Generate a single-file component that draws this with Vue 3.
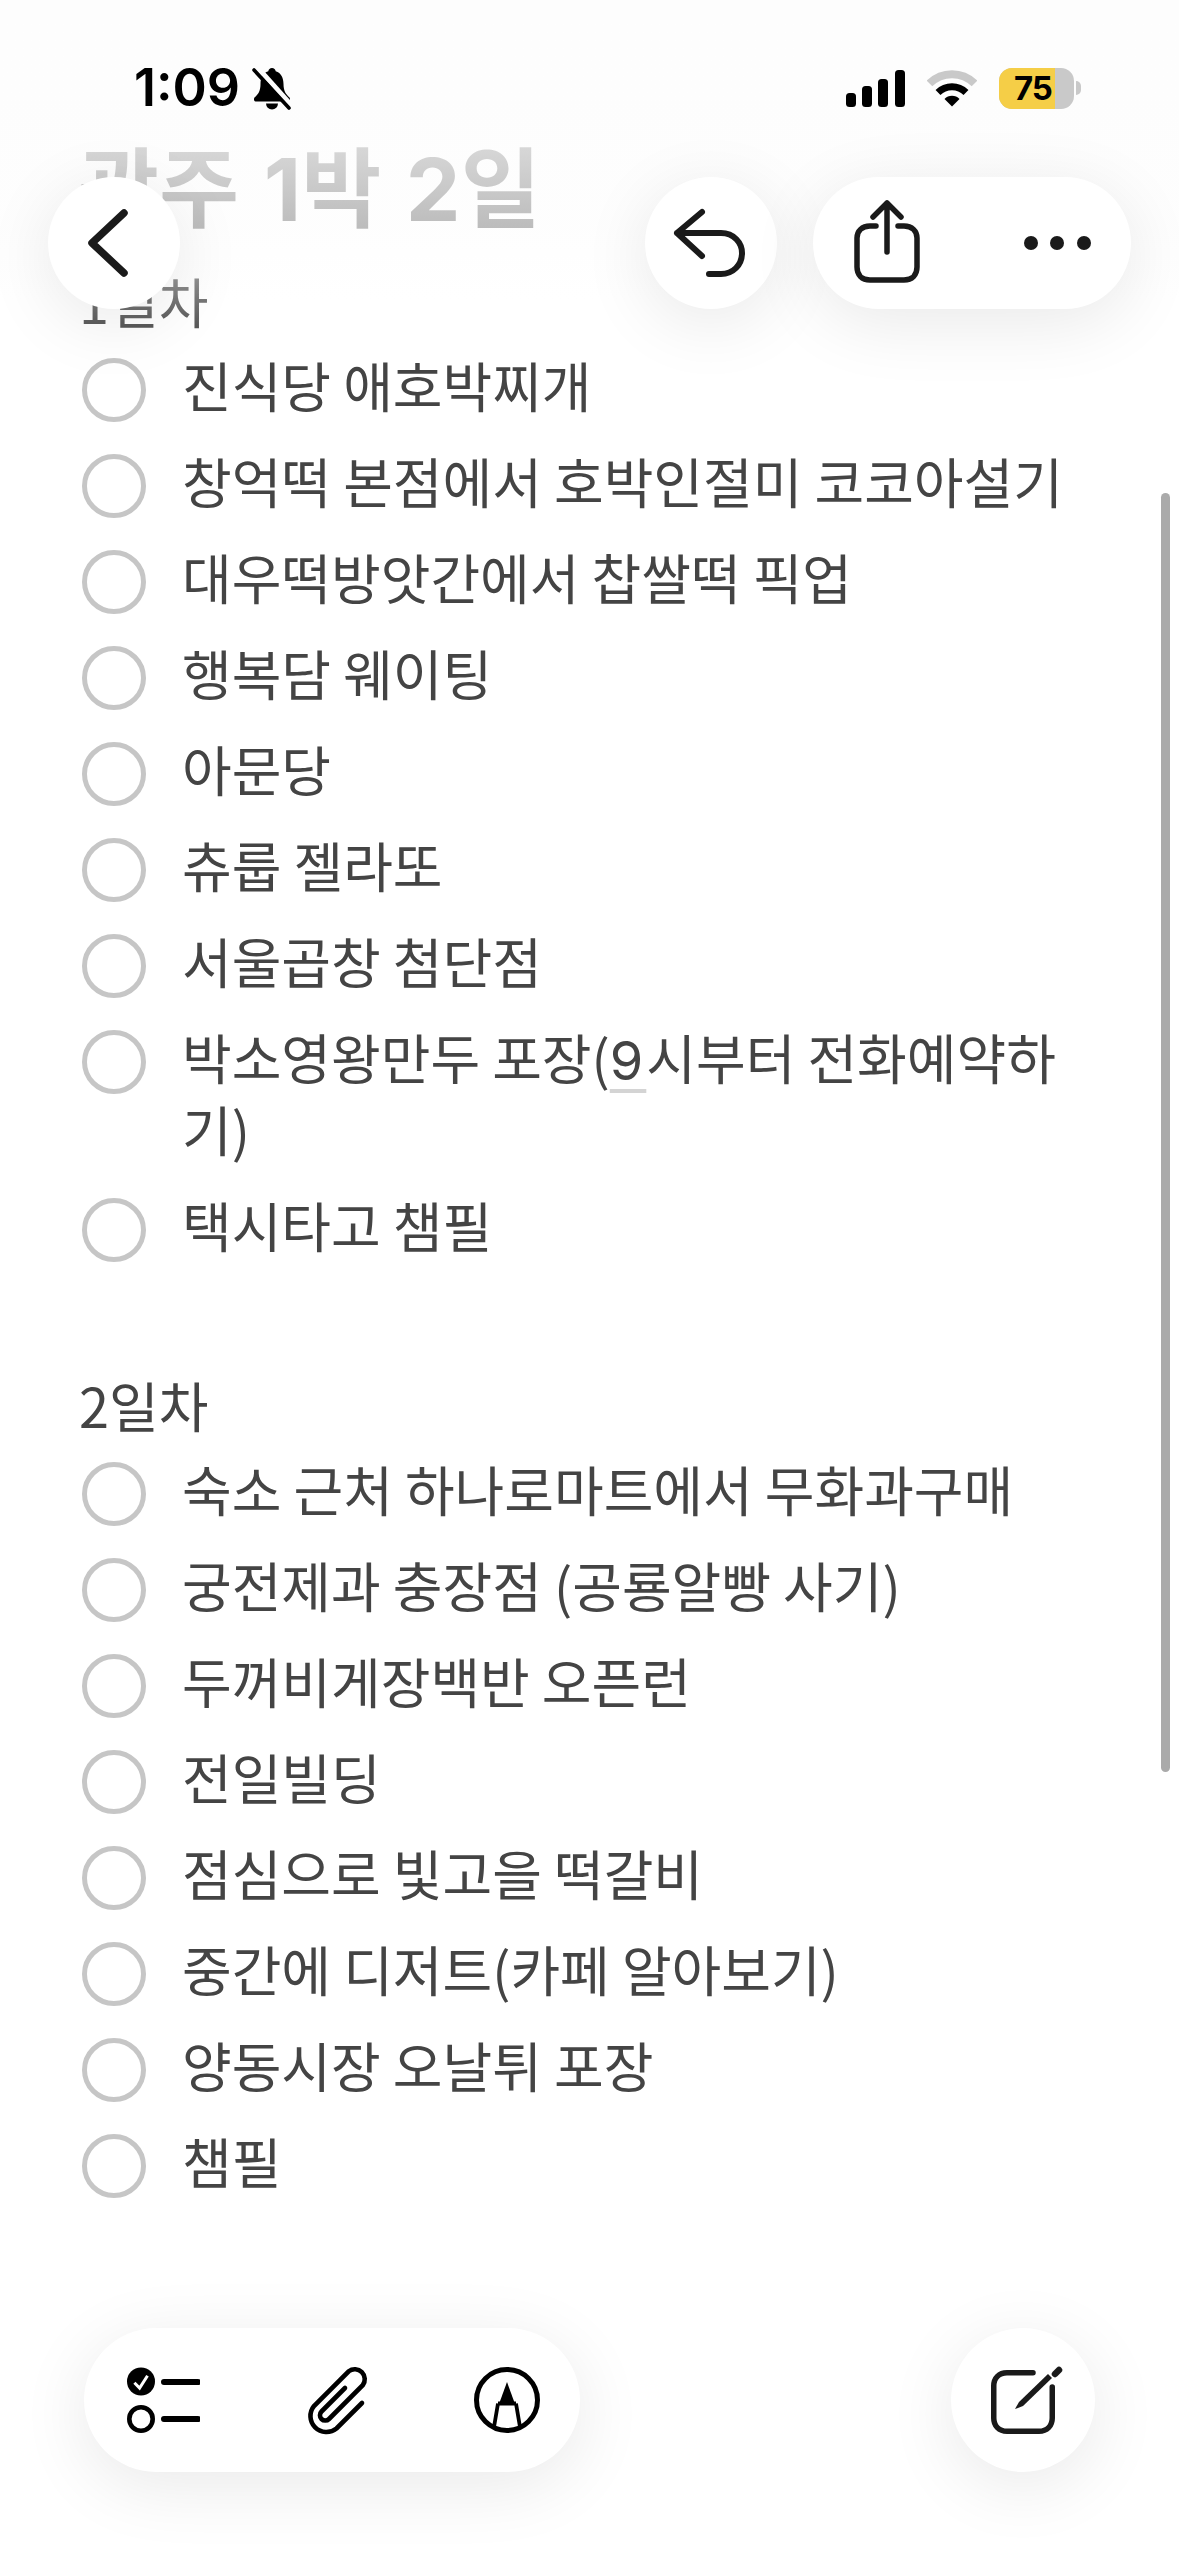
<script setup>
const dayOne = [
  { text: '진식당 애호박찌개' },
  { text: '창억떡 본점에서 호박인절미 코코아설기' },
  { text: '대우떡방앗간에서 찹쌀떡 픽업' },
  { text: '행복담 웨이팅' },
  { text: '아문당' },
  { text: '츄룹 젤라또' },
  { text: '서울곱창 첨단점' },
  { text: '박소영왕만두 포장(', mark: '9', rest: '시부터 전화예약하기)' },
  { text: '택시타고 챔필' }
]
const dayTwo = [
  { text: '숙소 근처 하나로마트에서 무화과구매' },
  { text: '궁전제과 충장점 (공룡알빵 사기)' },
  { text: '두꺼비게장백반 오픈런' },
  { text: '전일빌딩' },
  { text: '점심으로 빛고을 떡갈비' },
  { text: '중간에 디저트(카페 알아보기)' },
  { text: '양동시장 오날튀 포장' },
  { text: '챔필' }
]
const sections = [
  { title: '1일차', items: dayOne },
  { title: '2일차', items: dayTwo }
]
</script>

<template>
  <div class="screen">
    <main class="note">
      <h1 class="title">광주 1박 2일</h1>
      <section v-for="s in sections" :key="s.title" class="section">
        <p class="day">{{ s.title }}</p>
        <ul class="list">
          <li v-for="item in s.items" :key="item.text" class="row">
            <span class="circle"></span>
            <span class="label">{{ item.text }}<span v-if="item.mark" class="link">{{ item.mark }}</span>{{ item.rest }}</span>
          </li>
        </ul>
      </section>
    </main>

    <div class="fade"></div>

    <header class="status">
      <div class="status-left">
        <span class="time">1:09</span>
        <svg class="bell" width="40" height="43" viewBox="0 0 40 43">
          <path d="M20 1c-2 0-3.5 1.4-3.7 3.2C10.800 5.800 8.500 11 8.500 17c0 6.500-2 10-6 13.500-.8.700-.8 4 1 4h33c1.800 0 1.800-3.300 1-4-4-3.500-6-7-6-13.500 0-6-2.300-11.200-7.800-12.800C23.500 2.400 22 1 20 1z" fill="#000"/>
          <path d="M14 36.500a6 6 0 0 0 12 0z" fill="#000"/>
          <path d="M6 1 40 39" stroke="#fdfdfd" stroke-width="5"/>
          <path d="M2 3 37 41" stroke="#000" stroke-width="3.600" stroke-linecap="round"/>
        </svg>
      </div>
      <div class="status-right">
        <svg width="59" height="37" viewBox="0 0 59 37">
          <rect x="0" y="23" width="10" height="14" rx="3.500"/>
          <rect x="16" y="16" width="10" height="21" rx="3.500"/>
          <rect x="32" y="9" width="10" height="28" rx="3.500"/>
          <rect x="49" y="0" width="10" height="37" rx="3.500"/>
        </svg>
        <svg width="50" height="38" viewBox="0 0 50 38">
          <path d="M2.500 14.500a32 32 0 0 1 45 0" fill="none" stroke="#c9c9c9" stroke-width="8"/>
          <path d="M11 23.500a20 20 0 0 1 28 0" fill="none" stroke="#000" stroke-width="7"/>
          <path d="M17.500 30a10.500 10.500 0 0 1 15 0L25 37.500z" fill="#000"/>
        </svg>
        <div class="battery">
          <div class="cell">
            <div class="level"></div>
            <span class="pct">75</span>
          </div>
          <span class="nub"></span>
        </div>
      </div>
    </header>

    <nav class="nav">
      <button class="glass round" aria-label="뒤로">
        <svg width="60" height="80" viewBox="0 0 60 80">
          <path d="M40 10 8 40 40 70" fill="none" stroke="#1a1a1a" stroke-width="7.500" stroke-linecap="round" stroke-linejoin="round"/>
        </svg>
      </button>
      <div class="nav-right">
        <button class="glass round" aria-label="실행 취소">
          <svg width="80" height="76" viewBox="0 0 80 76">
            <path d="M31 7 6 28 31 51M6 28H50C63 28 71 38 71 48 71 60 62 69 50 69H38" fill="none" stroke="#1a1a1a" stroke-width="6" stroke-linecap="round" stroke-linejoin="round"/>
          </svg>
        </button>
        <div class="glass pill">
          <button class="slot slot-share" aria-label="공유">
            <svg width="70" height="86" viewBox="0 0 70 86">
              <path d="M24 26H18C10 26 5 31 5 38V67C5 75 10 80 18 80H52C60 80 65 75 65 67V38C65 31 60 26 52 26H46" fill="none" stroke="#1a1a1a" stroke-width="5.500" stroke-linecap="round"/>
              <path d="M35 52V3M21 17 35 3 49 17" fill="none" stroke="#1a1a1a" stroke-width="5.500" stroke-linecap="round" stroke-linejoin="round"/>
            </svg>
          </button>
          <button class="slot slot-more" aria-label="더 보기">
            <svg width="68" height="16" viewBox="0 0 68 16">
              <circle cx="7" cy="8" r="7" fill="#1a1a1a"/>
              <circle cx="33" cy="8" r="7" fill="#1a1a1a"/>
              <circle cx="60" cy="8" r="7" fill="#1a1a1a"/>
            </svg>
          </button>
        </div>
      </div>
    </nav>

    <footer class="toolbar">
      <div class="glass tool-pill">
        <svg width="73" height="66" viewBox="0 0 73 66">
          <circle cx="14" cy="14.500" r="14"/>
          <path d="M7.400 15.700 12.600 21 20.500 8.700" fill="none" stroke="#fff" stroke-width="3"/>
          <path d="M37 15H71M37 52H71" stroke="#000" stroke-width="6" stroke-linecap="round"/>
          <circle cx="14" cy="52" r="11.700" fill="none" stroke="#000" stroke-width="4.600"/>
        </svg>
        <svg width="62" height="69" viewBox="0 0 62 69">
          <path d="M56 37 30.500 62.500A16 16 0 0 1 8 40L42.750 5.250A10 10 0 0 1 56.750 19.250L23 53A5.300 5.300 0 0 1 15.500 45.500L39 22" fill="none" stroke="#000" stroke-width="4.600" stroke-linecap="round"/>
        </svg>
        <svg width="66" height="66" viewBox="0 0 66 66">
          <circle cx="33" cy="33" r="30.500" fill="none" stroke="#000" stroke-width="5"/>
          <path d="M33 15 25 37H41z" fill="#000"/>
          <path d="M24 36.500 20 60M42 36.500 46 60M24 36.500H42" fill="none" stroke="#000" stroke-width="3.800"/>
        </svg>
      </div>
      <button class="glass compose" aria-label="새 메모">
        <svg class="compose-icon" width="74" height="74" viewBox="0 0 74 74">
          <path d="M43 9.750H17C9 9.750 3.750 15 3.750 23V55C3.750 63 9 68.250 17 68.250H49C57 68.250 62.250 63 62.250 55V24" fill="none" stroke="#1a1a1a" stroke-width="5.500" stroke-linecap="round"/>
          <path d="M25 46 29 39 58 11 62 15 33 43z" fill="#1a1a1a"/>
          <path d="M65 11 69 7" stroke="#1a1a1a" stroke-width="6.500" stroke-linecap="round"/>
        </svg>
      </button>
    </footer>

    <div class="scrollbar"></div>
  </div>
</template>

<style>
html, body { margin: 0; background: #fff; }
</style>

<style scoped>
.screen {
  position: relative;
  width: 1179px;
  height: 2556px;
  overflow: hidden;
  background: #fff;
  font-family: "Noto Sans CJK KR", "Noto Sans", sans-serif;
}
.note {
  box-sizing: border-box;
  padding: 135px 90px 0 79px;
}
.title {
  margin: 0 0 20px;
  font-family: Inter, "Noto Sans CJK KR", sans-serif;
  font-size: 87px;
  line-height: 110px;
  font-weight: 700;
  word-spacing: 4px;
  color: #000;
  filter: blur(0.6px);
}
.section + .section { margin-top: 103px; }
.day {
  margin: 0 0 17px;
  font-size: 54px;
  line-height: 72px;
  color: #444;
}
.list {
  list-style: none;
  margin: 0;
  padding: 0 0 0 3px;
  display: flex;
  flex-direction: column;
  gap: 24px;
}
.row {
  display: flex;
  align-items: flex-start;
  gap: 36px;
}
.circle {
  flex: none;
  box-sizing: border-box;
  width: 64px;
  height: 64px;
  margin-top: 4px;
  border: 5.5px solid #c6c6c6;
  border-radius: 50%;
}
.label {
  margin: -5px 0 5px;
  font-size: 54px;
  line-height: 72px;
  color: #444;
}
.link {
  font-family: Inter, "Noto Sans", sans-serif;
  line-height: 0;
  letter-spacing: 3px;
  text-decoration: underline;
  text-decoration-color: #d4d4d4;
  text-decoration-thickness: 4px;
  text-underline-offset: 9px;
}
.fade {
  position: absolute;
  inset: 0 0 auto 0;
  height: 345px;
  background: linear-gradient(
    to bottom,
    #fdfdfd 0,
    rgba(253, 253, 253, 0.98) 100px,
    rgba(253, 253, 253, 0.85) 146px,
    rgba(253, 253, 253, 0.74) 229px,
    rgba(255, 255, 255, 0.27) 300px,
    rgba(255, 255, 255, 0) 345px
  );
}
.status {
  position: absolute;
  top: 67px;
  left: 134px;
  right: 98px;
  height: 42px;
  display: flex;
  justify-content: space-between;
  align-items: center;
}
.status-left {
  display: flex;
  align-items: center;
  gap: 12px;
}
.time {
  font-family: Inter, "Noto Sans", sans-serif;
  font-size: 52px;
  line-height: 42px;
  font-weight: 600;
  color: #000;
}
.status-right {
  display: flex;
  align-items: center;
  gap: 22px;
}
.battery {
  display: flex;
  align-items: center;
  gap: 2px;
}
.cell {
  position: relative;
  width: 75px;
  height: 41px;
  border-radius: 13px;
  overflow: hidden;
  background: #c9c9c9;
}
.level {
  width: 56px;
  height: 100%;
  background: #f5ce47;
}
.pct {
  position: absolute;
  inset: 0;
  padding-left: 15px;
  font-family: Inter, "Noto Sans", sans-serif;
  font-size: 33px;
  line-height: 41px;
  font-weight: 700;
  color: #000;
  letter-spacing: -1px;
}
.nub {
  width: 5px;
  height: 14px;
  border-radius: 0 7px 7px 0;
  background: #c9c9c9;
}
.nav {
  position: absolute;
  top: 177px;
  left: 48px;
  right: 48px;
  display: flex;
  justify-content: space-between;
}
.nav-right {
  display: flex;
  gap: 36px;
}
.glass {
  background: #fff;
  box-shadow: 0 14px 70px rgba(0, 0, 0, 0.09);
}
button {
  border: 0;
  padding: 0;
  background: none;
  display: flex;
  align-items: center;
  justify-content: center;
}
button.glass { background: #fff; }
.round {
  width: 132px;
  height: 132px;
  border-radius: 50%;
}
.pill {
  width: 318px;
  height: 132px;
  border-radius: 66px;
  display: flex;
  gap: 24px;
}
.slot-share { width: 148px; }
.slot-more { width: 146px; }
.toolbar {
  position: absolute;
  left: 84px;
  right: 84px;
  bottom: 84px;
  display: flex;
  justify-content: space-between;
}
.tool-pill {
  box-sizing: border-box;
  width: 496px;
  height: 144px;
  padding: 0 40px 0 43px;
  border-radius: 72px;
  display: flex;
  align-items: center;
  justify-content: space-between;
}
.compose {
  width: 144px;
  height: 144px;
  border-radius: 50%;
}
.compose-icon { margin-left: 8px; }
.scrollbar {
  position: absolute;
  top: 493px;
  right: 9px;
  width: 9px;
  height: 1279px;
  border-radius: 5px;
  background: #aaa;
}
</style>
